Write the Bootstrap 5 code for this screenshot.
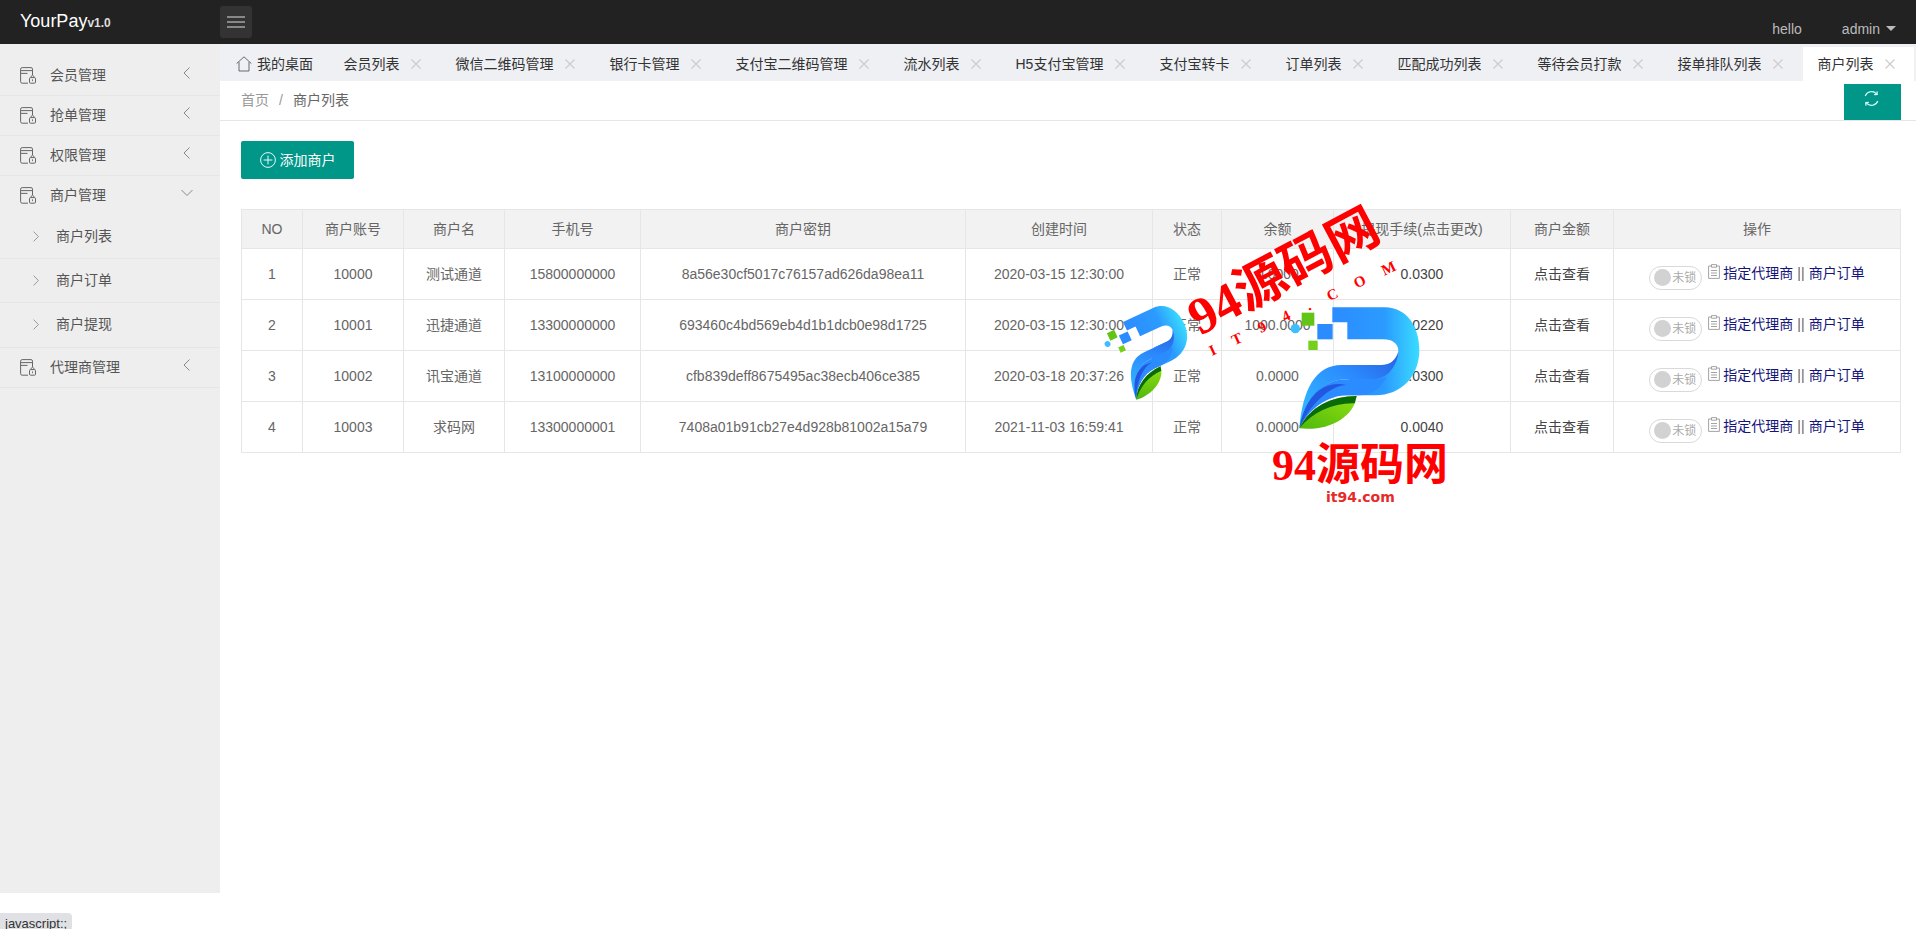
<!DOCTYPE html>
<html lang="zh-CN">
<head>
    <meta charset="UTF-8">
    <title>商户列表</title>
    <meta name="viewport" content="width=device-width, initial-scale=1">
    <link href="https://cdn.jsdelivr.net/npm/bootstrap@5.3.0/dist/css/bootstrap.min.css" rel="stylesheet">
    <style>
        html, body { height: 100%; }
        body { font-family: "Liberation Sans", "Noto Sans CJK SC", sans-serif; font-size: 14px; color: #666; background: #fff; overflow: hidden; position: relative; }

        /* top bar */
        .top-bar { height: 44px; background: #222; padding: 0; flex-wrap: nowrap; align-items: stretch; justify-content: flex-start; }
        .brand-box { width: 220px; padding: 9px 0 0 20px; color: #fff; font-size: 18px; line-height: 24px; flex: none; }
        .brand-box b { font-size: 12px; color: #ddd; }
        .menu-toggle { width: 32px; height: 32px; margin-top: 6px; background: #333; border: 0; border-radius: 3px; padding: 0; display: flex; align-items: center; justify-content: center; }
        .user-box { color: #bbb; padding: 20px 20px 0 0; line-height: 18px; gap: 40px; }
        .user-caret { display: inline-block; border: 5px solid transparent; border-top-color: #bbb; border-bottom: 0; margin-left: 6px; vertical-align: 3px; }

        /* sidebar */
        .main-wrap { height: 849px; }
        .side-menu { width: 220px; flex: none; background: #eee; padding-top: 12px; color: #555; }
        .side-item { height: 40px; padding: 0 27px 0 20px; border-bottom: 1px solid #e6e6e6; }
        .side-item.side-open { height: 39px; border: 0; }
        .side-item span { margin-left: 14px; }
        .side-sub { height: 44px; padding-left: 33px; border-bottom: 1px solid #e6e6e6; }
        .side-sub.side-last { height: 45px; padding-bottom: 1px; }
        .side-sub span { margin-left: 17px; }
        .ic-doc { width: 16px; height: 17px; flex: none; }
        .ic-chev { width: 12px; height: 12px; flex: none; margin-left: auto; margin-top: -6px; }
        .ic-chev-sub { width: 6px; height: 11px; flex: none; }

        /* tabs */
        .tab-strip { height: 37px; background: #eef0f3; padding: 3px 0 0 2px; flex-wrap: nowrap; }
        .page-tab { height: 34px; padding: 0 18.5px 0 14px; margin-right: 1px; color: #333; gap: 10.5px; white-space: nowrap; flex: none; }
        .page-tab.tab-on { background: #fff; }
        .page-tab.tab-home { padding-right: 15.5px; gap: 5px; }
        .ic-close { width: 12px; height: 12px; flex: none; }

        /* breadcrumb row */
        .crumb-row { height: 40px; border-bottom: 1px solid #e6e6e6; padding-left: 21px; }
        .crumb-row .breadcrumb { --bs-breadcrumb-margin-bottom: 0; --bs-breadcrumb-item-padding-x: 10px; --bs-breadcrumb-divider-color: #999; }
        .crumb-row .breadcrumb-item { color: #999; }
        .crumb-row .breadcrumb-item.active { color: #666; }
        .refresh-btn { width: 57px; height: 36px; margin: 3px 16px 0 0; background: #009688; border: 0; border-radius: 0; padding: 0 3px 8px 0; align-self: flex-start; }
        .refresh-btn:hover, .add-btn:hover { background: #009688; color: #fff; }

        /* content */
        .page-body { padding: 20px 16px 0 21px; }
        .add-btn { width: 113px; height: 38px; background: #009688; color: #fff; border: 0; border-radius: 2px; padding: 0; font-size: 14px; gap: 4px; margin-bottom: 30px; }
        .merchant-table { table-layout: fixed; --bs-table-border-color: #e6e6e6; --bs-table-color: #666; margin: 0; width: 1659px; font-size: 14px; }
        .merchant-table th { background: #f2f2f2; font-weight: 400; height: 39px; padding: 0; color: #666; vertical-align: middle; }
        .merchant-table td { height: 51px; padding: 0; }
        .w-no { width: 61px; } .w-acc { width: 101px; } .w-name { width: 101px; } .w-tel { width: 136px; }
        .w-key { width: 325px; } .w-time { width: 187px; } .w-st { width: 69px; } .w-bal { width: 112px; }
        .w-fee { width: 177px; } .w-amt { width: 103px; } .w-op { width: 287px; }
        .cell-dark { color: #444; }
        .lock-switch { width: 53px; height: 24px; border: 1px solid #d9d9d9; border-radius: 12px; color: #aaa; font-size: 12px; padding-left: 4px; gap: 1px; margin: 7px 6px 0 0; }
        .lock-dot { width: 17px; height: 17px; border-radius: 50%; background: #d2d2d2; flex: none; }
        .ic-note { width: 12px; height: 15px; flex: none; margin-right: 3px; margin-top: -5px; }
        .op-link { color: #14147a; text-decoration: none; margin-top: -1px; }
        .op-sep { color: #666; margin: -1px 4px 0; }

        /* watermark + browser status bubble lie over the page */
        .wm-layer { position: absolute; left: 0; top: 0; width: 1916px; height: 929px; pointer-events: none; }
        .wm-red { font-family: "Liberation Serif", "Noto Sans CJK SC", serif; font-weight: 700; fill: #f00; }
        .wm-site { font-family: "DejaVu Sans", sans-serif; font-weight: 700; fill: #e62a2a; }
        .status-tip { position: absolute; left: 0; bottom: 0; width: 72px; height: 16px; background: #dfe1e5; border-top-right-radius: 4px; font-size: 13px; line-height: 22px; color: #333; padding-left: 5px; overflow: hidden; white-space: nowrap; }
    </style>
</head>
<body>

<svg width="0" height="0" class="position-absolute">
    <symbol id="i-doc" viewBox="0 0 16 17">
        <path d="M12.5 8V2.2Q12.5 .6 11 .6H2.2Q.6 .6 .6 2.2V14.6Q.6 16.2 2.2 16.2H8" fill="none" stroke="#666" stroke-width="1"/>
        <path d="M.6 3.6H12.5M.6 6.4H7.5" fill="none" stroke="#666" stroke-width="1"/>
        <rect x="9.5" y="10.6" width="6" height="5.6" rx="1" fill="none" stroke="#666"/>
        <path d="M11 10.6V9.3Q12.5 7.8 14 9.3V10.6M12.5 12.4V14.2" fill="none" stroke="#666" stroke-width=".9"/>
    </symbol>
    <symbol id="i-close" viewBox="0 0 12 12">
        <path d="M1.5 1.5L10.5 10.5M10.5 1.5L1.5 10.5" stroke="#ccc" stroke-width="1.2" fill="none"/>
    </symbol>
    <symbol id="i-left" viewBox="0 0 12 12">
        <path d="M8.5 .5L3 6L8.5 11.5" stroke="#888" stroke-width="1" fill="none"/>
    </symbol>
    <symbol id="i-down" viewBox="0 0 12 12">
        <path d="M.5 3L6 8.5L11.5 3" stroke="#888" stroke-width="1" fill="none"/>
    </symbol>
    <symbol id="i-right" viewBox="0 0 6 11">
        <path d="M.6 .6L5.4 5.5L.6 10.4" stroke="#999" stroke-width="1" fill="none"/>
    </symbol>
    <symbol id="i-note" viewBox="0 0 12 15">
        <path d="M3.5 2H.6V14.4H11.4V2H8.5M3.5 .6H8.5V3.2H3.5ZM3 6.5H9M3 9H9M3 11.5H9" stroke="#999" stroke-width=".9" fill="none"/>
    </symbol>
</svg>

<nav class="navbar top-bar">
    <div class="brand-box">YourPay<b>v1.0</b></div>
    <button class="menu-toggle" type="button">
        <svg width="18" height="12" viewBox="0 0 18 12"><path d="M0 1H18M0 6H18M0 11H18" stroke="#ddd" stroke-width="1.2"/></svg>
    </button>
    <div class="user-box d-flex ms-auto">
        <span>hello</span>
        <span>admin<i class="user-caret"></i></span>
    </div>
</nav>

<div class="main-wrap d-flex">
    <aside class="side-menu">
        <div class="side-item d-flex align-items-center"><svg class="ic-doc"><use href="#i-doc"/></svg><span>会员管理</span><svg class="ic-chev"><use href="#i-left"/></svg></div>
        <div class="side-item d-flex align-items-center"><svg class="ic-doc"><use href="#i-doc"/></svg><span>抢单管理</span><svg class="ic-chev"><use href="#i-left"/></svg></div>
        <div class="side-item d-flex align-items-center"><svg class="ic-doc"><use href="#i-doc"/></svg><span>权限管理</span><svg class="ic-chev"><use href="#i-left"/></svg></div>
        <div class="side-item side-open d-flex align-items-center"><svg class="ic-doc"><use href="#i-doc"/></svg><span>商户管理</span><svg class="ic-chev"><use href="#i-down"/></svg></div>
        <div class="side-sub d-flex align-items-center"><svg class="ic-chev-sub"><use href="#i-right"/></svg><span>商户列表</span></div>
        <div class="side-sub d-flex align-items-center"><svg class="ic-chev-sub"><use href="#i-right"/></svg><span>商户订单</span></div>
        <div class="side-sub side-last d-flex align-items-center"><svg class="ic-chev-sub"><use href="#i-right"/></svg><span>商户提现</span></div>
        <div class="side-item d-flex align-items-center"><svg class="ic-doc"><use href="#i-doc"/></svg><span>代理商管理</span><svg class="ic-chev"><use href="#i-left"/></svg></div>
    </aside>

    <main class="flex-grow-1">
        <div class="tab-strip d-flex">
            <div class="page-tab tab-home d-flex align-items-center">
                <svg width="16" height="16" viewBox="0 0 16 16"><path d="M.6 7.6L8 .8L15.4 7.6M3 6V15H13V6" stroke="#667" stroke-width="1" fill="none"/></svg>
                我的桌面
            </div>
            <div class="page-tab d-flex align-items-center">会员列表<svg class="ic-close"><use href="#i-close"/></svg></div>
            <div class="page-tab d-flex align-items-center">微信二维码管理<svg class="ic-close"><use href="#i-close"/></svg></div>
            <div class="page-tab d-flex align-items-center">银行卡管理<svg class="ic-close"><use href="#i-close"/></svg></div>
            <div class="page-tab d-flex align-items-center">支付宝二维码管理<svg class="ic-close"><use href="#i-close"/></svg></div>
            <div class="page-tab d-flex align-items-center">流水列表<svg class="ic-close"><use href="#i-close"/></svg></div>
            <div class="page-tab d-flex align-items-center">H5支付宝管理<svg class="ic-close"><use href="#i-close"/></svg></div>
            <div class="page-tab d-flex align-items-center">支付宝转卡<svg class="ic-close"><use href="#i-close"/></svg></div>
            <div class="page-tab d-flex align-items-center">订单列表<svg class="ic-close"><use href="#i-close"/></svg></div>
            <div class="page-tab d-flex align-items-center">匹配成功列表<svg class="ic-close"><use href="#i-close"/></svg></div>
            <div class="page-tab d-flex align-items-center">等待会员打款<svg class="ic-close"><use href="#i-close"/></svg></div>
            <div class="page-tab d-flex align-items-center">接单排队列表<svg class="ic-close"><use href="#i-close"/></svg></div>
            <div class="page-tab tab-on d-flex align-items-center">商户列表<svg class="ic-close"><use href="#i-close"/></svg></div>
        </div>

        <div class="crumb-row d-flex align-items-center justify-content-between">
            <ol class="breadcrumb">
                <li class="breadcrumb-item">首页</li>
                <li class="breadcrumb-item active">商户列表</li>
            </ol>
            <button class="btn refresh-btn d-flex align-items-center justify-content-center" type="button">
                <svg width="17" height="17" viewBox="0 0 17 17" fill="none" stroke="#dff" stroke-width="1.2">
                    <path d="M2.2 6A6.8 6.8 0 0 1 13.5 3.8"/><path d="M14.8 11A6.8 6.8 0 0 1 3.5 13.2"/>
                    <path d="M11.2 4.6L14.2 4.4L14 1.4"/><path d="M5.8 12.4L2.8 12.6L3 15.6"/>
                </svg>
            </button>
        </div>

        <div class="page-body">
            <button class="btn add-btn d-flex align-items-center justify-content-center" type="button">
                <svg width="16" height="16" viewBox="0 0 16 16" fill="none" stroke="#dff" stroke-width="1"><circle cx="8" cy="8" r="7.4"/><path d="M8 3.6V12.4M3.6 8H12.4"/></svg>
                添加商户
            </button>

            <table class="table table-bordered merchant-table text-center align-middle">
                <thead>
                    <tr>
                        <th class="w-no">NO</th>
                        <th class="w-acc">商户账号</th>
                        <th class="w-name">商户名</th>
                        <th class="w-tel">手机号</th>
                        <th class="w-key">商户密钥</th>
                        <th class="w-time">创建时间</th>
                        <th class="w-st">状态</th>
                        <th class="w-bal">余额</th>
                        <th class="w-fee">提现手续(点击更改)</th>
                        <th class="w-amt">商户金额</th>
                        <th class="w-op">操作</th>
                    </tr>
                </thead>
                <tbody>
                    <tr>
                        <td>1</td><td>10000</td><td>测试通道</td><td>15800000000</td>
                        <td>8a56e30cf5017c76157ad626da98ea11</td><td>2020-03-15 12:30:00</td>
                        <td>正常</td><td>0.0000</td><td class="cell-dark">0.0300</td><td class="cell-dark">点击查看</td>
                        <td><div class="d-flex align-items-center justify-content-center">
                            <div class="lock-switch d-flex align-items-center"><i class="lock-dot"></i>未锁</div>
                            <svg class="ic-note"><use href="#i-note"/></svg><a class="op-link" href="#">指定代理商</a><span class="op-sep">||</span><a class="op-link" href="#">商户订单</a>
                        </div></td>
                    </tr>
                    <tr>
                        <td>2</td><td>10001</td><td>迅捷通道</td><td>13300000000</td>
                        <td>693460c4bd569eb4d1b1dcb0e98d1725</td><td>2020-03-15 12:30:00</td>
                        <td>正常</td><td>1000.0000</td><td class="cell-dark">0.0220</td><td class="cell-dark">点击查看</td>
                        <td><div class="d-flex align-items-center justify-content-center">
                            <div class="lock-switch d-flex align-items-center"><i class="lock-dot"></i>未锁</div>
                            <svg class="ic-note"><use href="#i-note"/></svg><a class="op-link" href="#">指定代理商</a><span class="op-sep">||</span><a class="op-link" href="#">商户订单</a>
                        </div></td>
                    </tr>
                    <tr>
                        <td>3</td><td>10002</td><td>讯宝通道</td><td>13100000000</td>
                        <td>cfb839deff8675495ac38ecb406ce385</td><td>2020-03-18 20:37:26</td>
                        <td>正常</td><td>0.0000</td><td class="cell-dark">0.0300</td><td class="cell-dark">点击查看</td>
                        <td><div class="d-flex align-items-center justify-content-center">
                            <div class="lock-switch d-flex align-items-center"><i class="lock-dot"></i>未锁</div>
                            <svg class="ic-note"><use href="#i-note"/></svg><a class="op-link" href="#">指定代理商</a><span class="op-sep">||</span><a class="op-link" href="#">商户订单</a>
                        </div></td>
                    </tr>
                    <tr>
                        <td>4</td><td>10003</td><td>求码网</td><td>13300000001</td>
                        <td>7408a01b91cb27e4d928b81002a15a79</td><td>2021-11-03 16:59:41</td>
                        <td>正常</td><td>0.0000</td><td class="cell-dark">0.0040</td><td class="cell-dark">点击查看</td>
                        <td><div class="d-flex align-items-center justify-content-center">
                            <div class="lock-switch d-flex align-items-center"><i class="lock-dot"></i>未锁</div>
                            <svg class="ic-note"><use href="#i-note"/></svg><a class="op-link" href="#">指定代理商</a><span class="op-sep">||</span><a class="op-link" href="#">商户订单</a>
                        </div></td>
                    </tr>
                </tbody>
            </table>
        </div>
    </main>
</div>

<!-- watermark laid over the table -->
<svg class="wm-layer" viewBox="0 0 1916 929">
    <defs>
        <linearGradient id="g-top" x1="0" y1="0" x2="1" y2="0">
            <stop offset="0" stop-color="#2b8cff"/><stop offset=".6" stop-color="#2b9bff"/><stop offset="1" stop-color="#3adcff"/>
        </linearGradient>
        <linearGradient id="g-stem" x1="0" y1="1" x2="1" y2="0">
            <stop offset="0" stop-color="#32c4ff"/><stop offset=".6" stop-color="#2b8cff"/><stop offset="1" stop-color="#2a5fe0"/>
        </linearGradient>
        <linearGradient id="g-leaf" x1="0" y1="1" x2="1" y2="0">
            <stop offset="0" stop-color="#4fb80c"/><stop offset="1" stop-color="#8fe010"/>
        </linearGradient>
        <g id="p-logo">
            <path d="M217 52H375C440 52 478 110 478 180C478 258 425 316 345 316H230L300 225H365C398 225 415 200 415 182C415 162 398 148 370 148H262V97H217Z" fill="url(#g-top)"/>
            <path d="M118 415C128 300 165 225 245 225H365C392 225 408 208 415 185C412 225 385 268 335 268H260C190 268 140 320 118 415Z" fill="url(#g-stem)"/>
            <path d="M118 415C135 320 190 268 260 268H335C352 268 365 266 380 260C360 295 340 316 290 316H260C200 318 150 355 118 415Z" fill="#2b8cff"/>
            <path d="M118 415C135 320 190 268 260 285C215 285 150 340 118 415Z" fill="#2257e0"/>
            <path d="M118 415C150 350 215 318 290 318C282 382 205 425 118 415Z" fill="url(#g-leaf)"/>
            <path d="M118 415C150 350 215 318 290 318L284 340C220 338 160 365 118 415Z" fill="#0a6b0a"/>
            <rect x="172" y="102" width="46" height="46" fill="#2b8cff"/>
            <rect x="125" y="68" width="38" height="39" fill="#62c414"/>
            <rect x="145" y="152" width="28" height="28" fill="#74d01a"/>
            <circle cx="106" cy="116" r="14" fill="#3dbfff"/>
        </g>
    </defs>
    <use href="#p-logo" transform="translate(1260 290) scale(.3333)"/>
    <use href="#p-logo" transform="translate(1123 322) rotate(-25) scale(.21) translate(-217 -52)"/>
    <text class="wm-red" font-size="52" transform="translate(1200 336) rotate(-28)">94源码网</text>
    <text class="wm-red" font-size="15" letter-spacing="19" transform="translate(1212 356) rotate(-25)">IT94.COM</text>
    <text class="wm-red" font-size="44" x="1272" y="480">94源码网</text>
    <text class="wm-site" font-size="14" x="1326" y="502">it94.com</text>
</svg>

<div class="status-tip">javascript:;</div>

<script src="https://cdn.jsdelivr.net/npm/bootstrap@5.3.0/dist/js/bootstrap.bundle.min.js"></script>
</body>
</html>
